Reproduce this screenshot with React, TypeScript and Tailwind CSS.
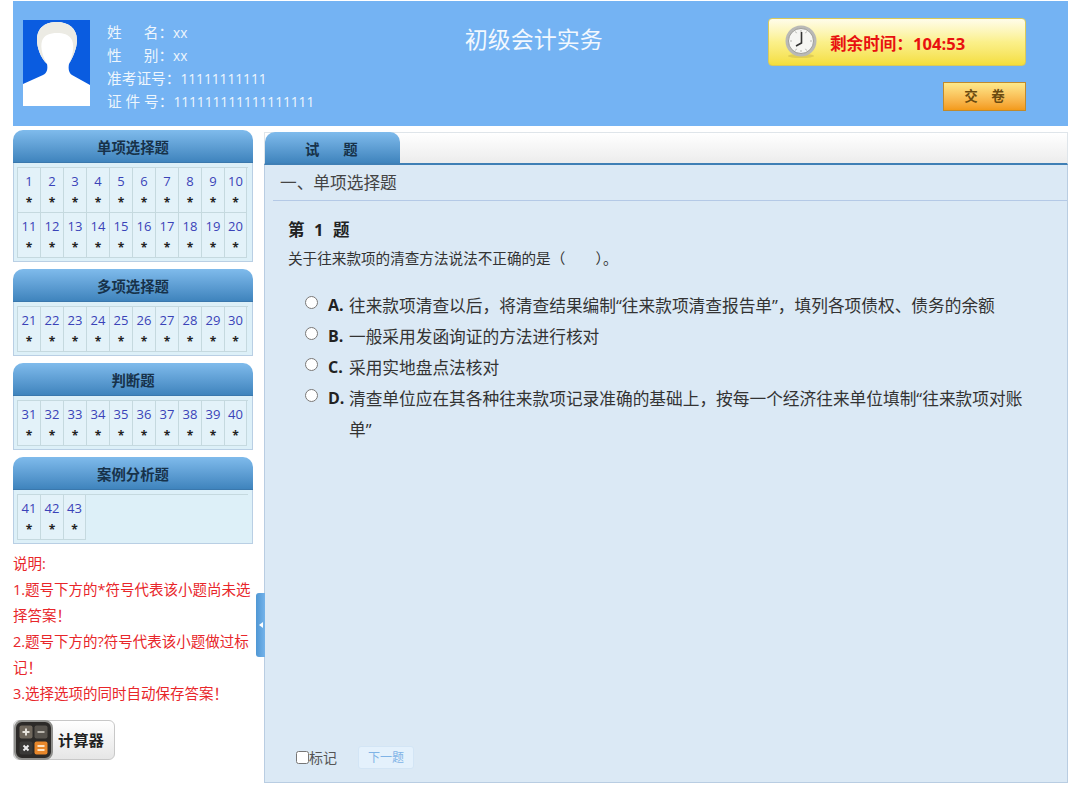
const groups = [
  { title: '单项选择题', rows: [[1, 2, 3, 4, 5, 6, 7, 8, 9, 10], [11, 12, 13, 14, 15, 16, 17, 18, 19, 20]] },
  { title: '多项选择题', rows: [[21, 22, 23, 24, 25, 26, 27, 28, 29, 30]] },
  { title: '判断题', rows: [[31, 32, 33, 34, 35, 36, 37, 38, 39, 40]] },
  { title: '案例分析题', rows: [[41, 42, 43]] },
];

const notes = [
  '说明:',
  '1.题号下方的*符号代表该小题尚未选择答案！',
  '2.题号下方的?符号代表该小题做过标记！',
  '3.选择选项的同时自动保存答案！',
];

const options = [
  { key: 'A.', text: '往来款项清查以后，将清查结果编制“往来款项清查报告单”，填列各项债权、债务的余额' },
  { key: 'B.', text: '一般采用发函询证的方法进行核对' },
  { key: 'C.', text: '采用实地盘点法核对' },
  { key: 'D.', text: '清查单位应在其各种往来款项记录准确的基础上，按每一个经济往来单位填制“往来款项对账单”' },
];

function Avatar() {
  return (
    <svg width="67" height="86" viewBox="0 0 67 86" className="shrink-0">
      <rect width="67" height="86" fill="#0a5ce0" />
      <path d="M0 64 L20 55 C24 53 25 49 24 44 C17 37 14 27 14 20 C14 7 23 2 34 2 C45 2 54 8 54 20 C54 28 50 37 46 44 C45 49 46 53 49 55 L67 65 L67 86 L0 86 Z" fill="#ffffff" />
      <path d="M24 44 C17 37 14 27 14 20 C14 7 23 2 34 2 C45 2 54 8 54 20 C54 28 50 37 46 44 C49 36 52 28 49 20 C46 14 40 13 34 13 C27 13 21 15 19 21 C17 28 20 37 24 44 Z" fill="#ecebe4" />
    </svg>
  );
}

function ClockIcon() {
  return (
    <svg width="32" height="34" viewBox="0 0 32 34" className="shrink-0">
      <ellipse cx="16" cy="31" rx="13" ry="2" fill="#c9b64a" opacity="0.5" />
      <circle cx="16" cy="16" r="15.5" fill="#b9b9b6" />
      <circle cx="16" cy="16" r="12.5" fill="#f6f6f3" stroke="#8e8e8a" strokeWidth="0.8" />
      <path d="M16 5v2M16 25v2M5 16h2M25 16h2M10.500 6.500l1 1.700M21.500 6.500l-1 1.700M10.500 25.500l1-1.700M21.500 25.500l-1-1.700" stroke="#a5a5a0" strokeWidth="0.8" />
      <path d="M16.500 7 L16.500 18 L11 21" fill="none" stroke="#333333" strokeWidth="1.600" />
    </svg>
  );
}

function CalcIcon() {
  return (
    <svg width="39" height="40" viewBox="0 0 39 40" className="shrink-0">
      <rect x="1" y="1" width="37" height="38" rx="7" fill="#2c2a28" stroke="#8f8f8c" strokeWidth="2" />
      <rect x="5.500" y="5.500" width="13" height="13" rx="2" fill="#6f675c" />
      <rect x="20.500" y="5.500" width="13" height="13" rx="2" fill="#57534d" />
      <rect x="5.500" y="21.500" width="13" height="13" rx="2" fill="#3b3a38" />
      <rect x="20.500" y="21.500" width="13" height="13" rx="2" fill="#e8872a" />
      <path d="M8.500 12h7M12 8.500v7" stroke="#e6e2da" strokeWidth="2" />
      <path d="M23.500 12h7" stroke="#b9b5ad" strokeWidth="2" />
      <path d="M9.500 25.500l5 5M14.500 25.500l-5 5" stroke="#ececec" strokeWidth="2" />
      <path d="M23.500 26h7M23.500 30h7" stroke="#fbe3c5" strokeWidth="2" />
    </svg>
  );
}

function QuestionGroup({ title, rows }: { title: string; rows: number[][] }) {
  return (
    <div>
      <div className="h-[33px] pt-[3px] rounded-t-[10px] bg-gradient-to-b from-[#7fbbec] to-[#3f84bd] border-b border-[#3a78ad] flex items-center justify-center text-[14.4px] font-bold text-[#17324a]">
        {title}
      </div>
      <div className="border border-t-0 border-[#b9cfe4] bg-[#ddf0f8] pt-[4px] pb-[3px] pl-[3px] pr-[4px]">
        <div className="border-t border-[#c5d9df]">
          {rows.map((row) => (
            <div key={row[0]} className="flex">
              {row.map((n) => (
                <div key={n} className="w-[23px] h-[45px] border-l border-b border-[#c5d9df] bg-[#e3f2f9] last:border-r flex flex-col items-center">
                  <span className="mt-[3px] h-[20px] leading-[20px] text-[13px] text-[#3a43b8]">{n}</span>
                  <span className="mt-[1px] h-[19px] leading-[21px] text-[12px] font-bold text-[#222222]">*</span>
                </div>
              ))}
            </div>
          ))}
        </div>
      </div>
    </div>
  );
}

export default function App() {
  return (
    <div className="w-[1080px] h-[800px] bg-white overflow-hidden font-['Open_Sans','Noto_Sans_CJK_SC',sans-serif]">
      <div className="w-[1055px] ml-[13px] pt-[1px]">
        <header className="h-[125px] bg-[#74b3f3] flex">
          <div className="pl-[10px] pt-[19px] flex shrink-0">
            <Avatar />
            <div className="ml-[17px] mt-[1px] text-[14.7px] leading-[23px] text-[#eef6fd] whitespace-nowrap">
              <div>姓&emsp;&ensp;名：<span className="text-[13.7px]">xx</span></div>
              <div>性&emsp;&ensp;别：<span className="text-[13.7px]">xx</span></div>
              <div>准考证号：<span className="text-[13.7px]">11111111111</span></div>
              <div>证 件 号：<span className="text-[13.7px]">111111111111111111</span></div>
            </div>
          </div>
          <div className="flex-1 pr-[15px] pt-[21px] text-center text-[23px] leading-[34px] text-[#f2f8fe]">初级会计实务</div>
          <div className="w-[258px] mr-[42px] pt-[17px] flex flex-col items-end shrink-0">
            <div className="w-[258px] h-[48px] rounded-[4px] border border-[#d9c95a] bg-gradient-to-b from-[#fffcea] via-[#fbf08a] to-[#f4de3a] flex items-center pl-[16px] text-[16.6px] font-bold text-[#e81010]">
              <ClockIcon />
              <span className="ml-[13px] mt-[4px]">剩余时间：104:53</span>
            </div>
            <button className="mt-[16px] w-[83px] h-[29px] border border-[#c08a2c] bg-gradient-to-b from-[#fde98a] to-[#f39a16] text-[13.5px] font-bold text-[#6a4a10]">
              交&emsp;卷
            </button>
          </div>
        </header>

        <div className="relative mt-[4px] flex gap-[11px]">
          <aside className="w-[240px] shrink-0">
            <div className="flex flex-col gap-[7px]">
              {groups.map((g) => (
                <QuestionGroup key={g.title} title={g.title} rows={g.rows} />
              ))}
            </div>
            <div className="mt-[7px] text-[14.5px] leading-[26px] text-[#e8262a]">
              {notes.map((n) => (
                <p key={n}>{n}</p>
              ))}
            </div>
            <button className="mt-[13px] w-[102px] h-[40px] rounded-[6px] border border-[#c8c8c8] bg-gradient-to-b from-white to-[#e6e6e6] flex items-center text-[15.3px] font-bold text-[#222222]">
              <CalcIcon />
              <span className="ml-[5px]">计算器</span>
            </button>
          </aside>

          <main className="w-[804px] mt-[2px] h-[651px] flex flex-col">
            <div className="h-[33px] shrink-0 border border-b-0 border-[#dfe5ea] bg-gradient-to-b from-white to-[#ececec] flex items-end border-b-2 border-b-[#3f7fb5]">
              <div className="w-[135px] h-[31px] rounded-t-[10px] bg-gradient-to-b from-[#7fbbec] to-[#3f84bd] pl-[40px] text-[14.4px] leading-[35px] font-bold text-[#17324a]">
                试&emsp;&ensp;&thinsp;题
              </div>
            </div>
            <div className="flex-1 border border-t-0 border-[#b9cde2] bg-[#dbe9f5] flex flex-col justify-between">
              <div>
                <div className="ml-[8px] h-[36px] border-b border-[#b4c9e6] pl-[7px] text-[16.7px] leading-[36px] text-[#444444]">一、单项选择题</div>
                <div className="pl-[23px] pt-[17px]">
                  <div className="text-[16.5px] tracking-[0.3px] leading-[24px] font-bold text-[#222222] whitespace-pre">第  1  题</div>
                  <div className="mt-[4px] text-[14.6px] leading-[24px] text-[#333333] whitespace-pre">关于往来款项的清查方法说法不正确的是（        ）。</div>
                </div>
                <div className="mt-[20px] pl-[40px] pr-[36px] flex flex-col">
                  {options.map((o) => (
                    <label key={o.key} className="flex text-[16.7px] leading-[31px] text-[#333333]">
                      <input type="radio" name="answer" className="w-[13px] h-[13px] mt-[6px] shrink-0 self-start" />
                      <span className="ml-[10px] w-[21px] shrink-0 font-bold text-[16px] text-[#222222]">{o.key}</span>
                      <span className="flex-1">{o.text}</span>
                    </label>
                  ))}
                </div>
              </div>
              <div className="pl-[31px] pb-[13px] flex items-center">
                <label className="flex items-center text-[14px] text-[#555555]">
                  <input type="checkbox" className="w-[13px] h-[13px]" />
                  标记
                </label>
                <button className="ml-[21px] w-[56px] h-[23px] rounded-[3px] border border-[#d3e5f5] bg-[#e4f1fc] text-[12px] text-[#7fb3e6]">下一题</button>
              </div>
            </div>
          </main>

          <div className="absolute left-[243px] top-[463px] w-[9px] h-[64px] rounded-l-[3px] bg-gradient-to-r from-[#4f97d4] to-[#74b3ea] flex items-center justify-center">
            <span className="w-0 h-0 border-y-[3px] border-y-transparent border-r-[4px] border-r-white" />
          </div>
        </div>
      </div>
    </div>
  );
}
